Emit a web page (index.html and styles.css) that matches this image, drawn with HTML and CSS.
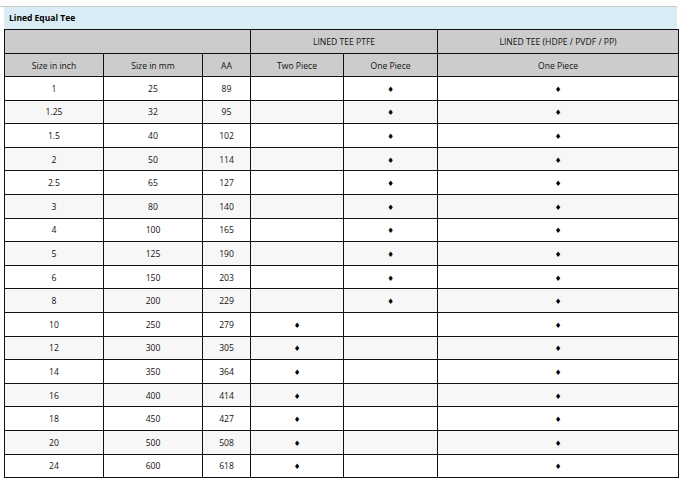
FILE: index.html
```html
<!DOCTYPE html>
<html>
<head>
<meta charset="utf-8">
<link rel="stylesheet" href="styles.css">
</head>
<body>
<div class="panel">
  <div class="title">Lined Equal Tee</div>
  <table class="spec">
    <colgroup>
      <col class="c1"><col class="c2"><col class="c3"><col class="c4"><col class="c5"><col class="c6">
    </colgroup>
    <thead>
      <tr><th colspan="3"></th><th colspan="2">LINED TEE PTFE</th><th>LINED TEE (HDPE / PVDF / PP)</th></tr>
      <tr><th>Size in inch</th><th>Size in mm</th><th>AA</th><th>Two Piece</th><th>One Piece</th><th>One Piece</th></tr>
    </thead>
    <tbody>
      <tr><td>1</td><td>25</td><td>89</td><td></td><td><span class="d">♦</span></td><td><span class="d">♦</span></td></tr>
      <tr><td>1.25</td><td>32</td><td>95</td><td></td><td><span class="d">♦</span></td><td><span class="d">♦</span></td></tr>
      <tr><td>1.5</td><td>40</td><td>102</td><td></td><td><span class="d">♦</span></td><td><span class="d">♦</span></td></tr>
      <tr><td>2</td><td>50</td><td>114</td><td></td><td><span class="d">♦</span></td><td><span class="d">♦</span></td></tr>
      <tr><td>2.5</td><td>65</td><td>127</td><td></td><td><span class="d">♦</span></td><td><span class="d">♦</span></td></tr>
      <tr><td>3</td><td>80</td><td>140</td><td></td><td><span class="d">♦</span></td><td><span class="d">♦</span></td></tr>
      <tr><td>4</td><td>100</td><td>165</td><td></td><td><span class="d">♦</span></td><td><span class="d">♦</span></td></tr>
      <tr><td>5</td><td>125</td><td>190</td><td></td><td><span class="d">♦</span></td><td><span class="d">♦</span></td></tr>
      <tr><td>6</td><td>150</td><td>203</td><td></td><td><span class="d">♦</span></td><td><span class="d">♦</span></td></tr>
      <tr><td>8</td><td>200</td><td>229</td><td></td><td><span class="d">♦</span></td><td><span class="d">♦</span></td></tr>
      <tr><td>10</td><td>250</td><td>279</td><td><span class="d">♦</span></td><td></td><td><span class="d">♦</span></td></tr>
      <tr><td>12</td><td>300</td><td>305</td><td><span class="d">♦</span></td><td></td><td><span class="d">♦</span></td></tr>
      <tr><td>14</td><td>350</td><td>364</td><td><span class="d">♦</span></td><td></td><td><span class="d">♦</span></td></tr>
      <tr><td>16</td><td>400</td><td>414</td><td><span class="d">♦</span></td><td></td><td><span class="d">♦</span></td></tr>
      <tr><td>18</td><td>450</td><td>427</td><td><span class="d">♦</span></td><td></td><td><span class="d">♦</span></td></tr>
      <tr><td>20</td><td>500</td><td>508</td><td><span class="d">♦</span></td><td></td><td><span class="d">♦</span></td></tr>
      <tr><td>24</td><td>600</td><td>618</td><td><span class="d">♦</span></td><td></td><td><span class="d">♦</span></td></tr>
    </tbody>
  </table>
</div>
</body>
</html>
```
FILE: styles.css
```css
html, body {
  margin: 0;
  padding: 0;
  background: #ffffff;
}
body {
  padding-top: 6px;
  font-family: "Open Sans", "Noto Sans", sans-serif;
  color: #111;
}
.panel {
  width: 677px;
  border-top: 1px solid #c9c9c9;
}
.title {
  margin-left: 4px;
  height: 22px;
  line-height: 22px;
  background: #daedf6;
  padding-left: 5px;
  font-size: 8.5px;
  font-weight: 700;
  color: #000;
}
.spec {
  margin-left: 4px;
  width: 674px;
  border-collapse: collapse;
  table-layout: fixed;
  font-size: 8.6px;
}
.c1 { width: 99px; }
.c2 { width: 99px; }
.c3 { width: 48px; }
.c4 { width: 93px; }
.c5 { width: 94px; }
.c6 { width: 241px; }
.spec th, .spec td {
  border: 1px solid #111;
  text-align: center;
  padding: 1px 0 0;
  font-weight: 400;
}
.spec thead th {
  background: #cccccc;
}
.spec thead tr:first-child { height: 24px; }
.spec thead tr:last-child { height: 23px; }
.spec tbody tr { height: 23.6px; }
.spec tbody tr:nth-child(even) { background: #f7f7f7; }
.d {
  font-family: "DejaVu Sans", sans-serif;
  font-size: 7.5px;
  color: #000;
}
```
